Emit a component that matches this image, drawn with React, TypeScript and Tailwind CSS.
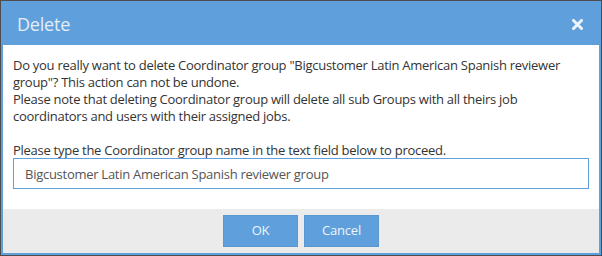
import React from "react";

export default function App() {
  return (
    <div className="w-[602px] h-[256px] border border-[#4d4d4d] bg-white font-['Open_Sans',sans-serif]">
      <div className="flex h-full flex-col border-2 border-[#5fa0dc]">
        {/* Header */}
        <div className="flex h-[42px] items-center justify-between bg-[#5fa0dc] pl-[14px] pr-[16px]">
          <span className="text-[18px] tracking-[-0.2px] text-[#e4edf7]">Delete</span>
          <svg width="11" height="11" viewBox="0 0 11 11" className="mt-[1px]">
            <path d="M1.5 1.5 L9.5 9.5 M9.5 1.5 L1.5 9.5" stroke="#eef4fb" strokeWidth="3" strokeLinecap="square" />
          </svg>
        </div>

        {/* Body */}
        <div className="flex flex-1 flex-col px-[10px] pt-[12px]">
          <p className="text-[13px] leading-[17px] tracking-[-0.27px] text-[#333]">
            Do you really want to delete Coordinator group "Bigcustomer Latin American Spanish reviewer group"? This
            action can not be undone.
            <br />
            Please note that deleting Coordinator group will delete all sub Groups with all theirs job coordinators and
            users with their assigned jobs.
            <br />
            <br />
            Please type the Coordinator group name in the text field below to proceed.
          </p>
          <input
            defaultValue="Bigcustomer Latin American Spanish reviewer group"
            className="mt-[-1px] h-[31px] w-full border border-[#5fa0dc] px-[11px] text-[13px] tracking-[-0.27px] text-[#555] outline-none"
          />
        </div>

        {/* Footer */}
        <div className="flex h-[44px] items-center justify-center gap-[6px] bg-[#ebebeb]">
          <button className="h-[32px] w-[75px] border border-[#5897d0] bg-[#5fa0dc] text-[13px] tracking-[-0.2px] text-[#eef4fb]">OK</button>
          <button className="h-[32px] w-[75px] border border-[#5897d0] bg-[#5fa0dc] text-[13px] tracking-[-0.2px] text-[#eef4fb]">Cancel</button>
        </div>
      </div>
    </div>
  );
}
